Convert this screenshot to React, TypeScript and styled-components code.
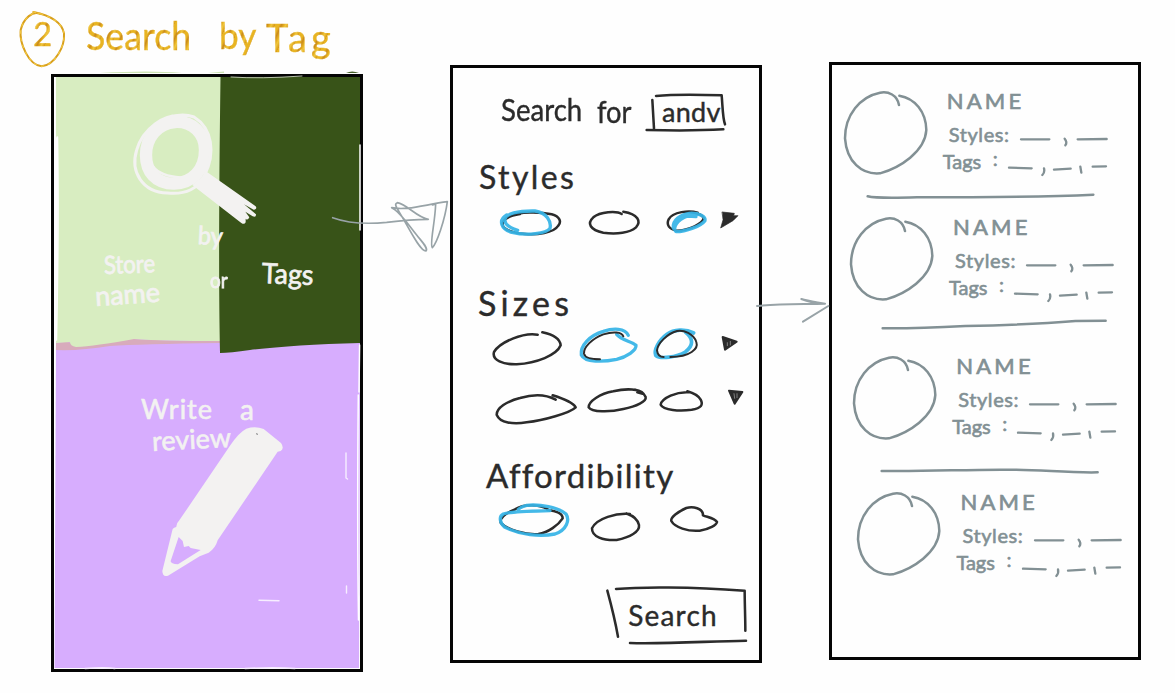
import React from "react";
import styled, { createGlobalStyle } from "styled-components";

const INK = "#2b2b2b";
const SLATE = "#829094";
const BLUE = "#36b4e6";
const CHALK = "#f3f2f1";

const GlobalStyle = createGlobalStyle`
  body { margin: 0; background: #fefefe; overflow: hidden; }
  * { box-sizing: border-box; }
`;

const Board = styled.main`
  width: 1175px;
  height: 693px;
  display: flex;
  flex-direction: column;
  font-family: Lato, "Liberation Sans", sans-serif;
  background: #fefefe;
`;

const Heading = styled.header`
  display: flex;
  height: 62px;
  padding: 10px 0 0 18px;
  color: #dca41c;
`;

const Flow = styled.div`
  display: flex;
  align-items: flex-start;
  padding-left: 51px;
`;

const Phone = styled.section<{ $drop: number }>`
  position: relative;
  flex: 0 0 312px;
  height: 598px;
  margin-top: ${(p) => p.$drop}px;
  border: 3px solid #050505;
  display: flex;
  flex-direction: column;
`;

const Line = styled.div<{ $top: number; $h: number }>`
  display: flex;
  flex: none;
  position: relative;
  margin-top: ${(p) => p.$top}px;
  height: ${(p) => p.$h}px;
  line-height: ${(p) => p.$h}px;
`;

const Word = styled.span<{
  $size: number;
  $w: number;
  $left?: number;
  $drop?: number;
  $track?: number;
  $stretch?: number;
  $tilt?: number;
  $bold?: number;
}>`
  flex: 0 0 ${(p) => p.$w}px;
  width: ${(p) => p.$w}px;
  margin-left: ${(p) => p.$left ?? 0}px;
  margin-top: ${(p) => p.$drop ?? 0}px;
  white-space: nowrap;
  font-size: ${(p) => p.$size}px;
  letter-spacing: ${(p) => p.$track ?? 0}px;
  -webkit-text-stroke: ${(p) => p.$bold ?? 0.4}px currentColor;
  transform: rotate(${(p) => p.$tilt ?? 0}deg) scaleX(${(p) => p.$stretch ?? 1});
  transform-origin: left center;
`;

const GoldWord = styled(Word)`
  align-self: flex-start;
  padding-bottom: 8px;
  background: repeating-linear-gradient(115deg, #e8b422 0 4px, #c98a1c 6px, #e2aa1c 8px, #f0c63c 10px, #d79a18 13px);
  background-clip: text;
  -webkit-background-clip: text;
  color: transparent;
`;

const Drawing = styled.svg<{ $left?: number; $top?: number }>`
  display: block;
  flex: none;
  overflow: visible;
  margin-left: ${(p) => p.$left ?? 0}px;
  margin-top: ${(p) => p.$top ?? 0}px;
  fill: none;
  stroke-linecap: round;
  stroke-linejoin: round;
`;

const Backdrop = styled(Drawing)`
  position: absolute;
  left: 0;
  top: 0;
`;

const Connector = styled(Drawing)`
  position: relative;
  z-index: 2;
  stroke: #98a3a7;
`;

type DoodleProps = {
  box: [number, number, number, number];
  left?: number;
  top?: number;
  children: React.ReactNode;
};

/* Sketches are drawn at three units to the pixel. */
const Doodle = ({ box, left, top, children }: DoodleProps) => (
  <Drawing $left={left} $top={top} width={box[2] / 3} height={box[3] / 3} viewBox={box.join(" ")}>
    {children}
  </Drawing>
);

const Ink = ({ d, w = 7.6 }: { d: string; w?: number }) => <path d={d} stroke={INK} strokeWidth={w} />;
const Mark = ({ d, w = 10 }: { d: string; w?: number }) => (
  <path d={d} stroke={BLUE} strokeWidth={w} opacity={0.93} />
);

const Field = styled.div`
  position: relative;
  flex: 0 0 80px;
  margin-left: 16px;
  display: flex;
`;

const SearchButton = styled.button`
  position: relative;
  width: 141px;
  height: 56px;
  margin: 44px 0 0 154px;
  padding: 0;
  border: 0;
  background: none;
  display: flex;
  align-items: center;
  font: inherit;
  color: ${INK};
`;

const Form = styled.div`
  color: ${INK};
  display: flex;
  flex-direction: column;
`;

const Chalk = styled.div`
  position: relative;
  color: ${CHALK};
  display: flex;
  flex-direction: column;
`;

const Card = styled.article<{ $left: number; $top: number }>`
  display: flex;
  height: 85px;
  margin: ${(p) => p.$top}px 0 0 ${(p) => p.$left}px;
  color: ${SLATE};
`;

const Details = styled.div`
  margin-left: 15px;
  display: flex;
  flex-direction: column;
`;

const Home = () => (
  <Phone $drop={12}>
    <Backdrop width="306" height="592" viewBox="54 77 306 592">
      <path d="M100 73 Q150 70 182 73Z M208 73 L224 71.5 L224 73Z" fill="#cfe5b6" />
      <path d="M346 73 Q352 70 359 73Z" fill="#48622c" />
      <path d="M56 340 L220 338 L360 338 L359 668 L54.5 668 Z" fill="#d7adfe" />
      <path d="M56 350 L56 343 Q66 341 72 343 Q100 342 122 338.5 Q165 341 220 341 L220 343 Q140 344 110 346 Q80 351 56 350Z" fill="#d8abbc" />
      <path d="M56 77 L221 77 L220 341 Q165 341 134 339 Q95 346 76 347 Q70 346 70 342 L56 343 Q58 230 58 140 L56 136Z" fill="#d8edc1" />
      <path d="M220.5 77 L360 77 L360 343 Q290 345 250 350 Q230 353 220 353 Q218 260 220.5 77Z" fill="#385318" />
      <path d="M231 77 Q260 79 302 76" stroke="#b8c3aa" strokeWidth="1" />
      <path d="M57.5 137 Q59 220 56.5 340 M359.6 345 L359 392 M358.3 395 Q357 520 358.5 620 M360 145 V230" stroke="#fff" strokeWidth="1.5" />
      <path d="M346 453 V478 L347.5 479 M346.5 586 V593 M259 600.3 L279 600.8 M85 668.5 Q105 667 115 668.5 M245 668.5 Q275 667 295 668.5" stroke="#f7eeff" strokeWidth="1.4" />
    </Backdrop>
    <Chalk>
      <Doodle left={79} top={35} box={[27, 21, 378, 340]}>
        <path d="M153 51 C205 48 243 85 243 135 C243 195 205 234 150 236 C95 236 66 200 66 150 C66 100 100 54 153 51Z" stroke={CHALK} strokeWidth="37" />
        <path d="M185 34 C120 20 55 75 38 135 C18 200 55 262 130 264 C185 270 225 250 242 210 C275 145 265 70 210 36 C160 18 95 45 65 85" stroke={CHALK} strokeWidth="9" />
        <path d="M88 185 C105 207 140 215 170 217" stroke={CHALK} strokeWidth="7" />
        <path d="M205 240 L250 202 L395 304 Q401 313 389 314 L360 298 L396 328 Q397 338 386 334 L364 320 L376 337 Q371 348 365 341 L365 352 Q361 360 352 354Z" fill={CHALK} />
      </Doodle>
      <Line $top={-5} $h={28}>
        <Word $left={144} $size={25} $w={25} $stretch={0.94} $tilt={3} $bold={0.8}>by</Word>
      </Line>
      <Line $top={2} $h={28}>
        <Word $left={50} $size={25} $w={52} $stretch={0.88} $tilt={-2} $bold={0.8}>Store</Word>
        <Word $left={54} $drop={16} $size={21} $w={18} $stretch={0.9} $bold={0.8}>or</Word>
        <Word $left={34} $drop={8} $size={28} $w={55} $stretch={0.96} $tilt={2} $bold={0.7}>Tags</Word>
      </Line>
      <Line $top={4} $h={28}>
        <Word $left={41} $size={27} $w={67} $tilt={-4} $bold={0.8}>name</Word>
      </Line>
      <Line $top={84} $h={30}>
        <Word $left={87} $size={27} $w={73} $track={1} $bold={0.6}>Write</Word>
        <Word $left={26} $size={28} $w={15} $bold={0.6}>a</Word>
      </Line>
      <Line $top={2} $h={30}>
        <Word $left={98} $size={27} $w={82} $tilt={-3} $bold={0.6}>review</Word>
      </Line>
      <Doodle left={108} top={-29} box={[350, 290, 365, 450]}>
        <path d="M603 295 Q630 286 655 296 L707 338 Q718 354 706 362 L697 364 L517 630 Q510 655 490 667 L463 678 L368 736 Q352 742 351 722 L381 600 Q382 592 393 590 Q392 580 402 570 L555 345 Q580 307 603 295Z M400 620 L376 692 Q375 700 398 702 L466 659 L436 653 L430 647 L416 650 L412 632Z" fill={CHALK} fillRule="evenodd" />
        <path d="M634 310 l2 2" stroke="#999" strokeWidth="4" />
      </Doodle>
    </Chalk>
  </Phone>
);

const Filters = () => (
  <Phone $drop={3}>
    <Form>
      <Line $top={24} $h={40}>
        <Word $left={48} $drop={-3} $size={30} $w={83} $stretch={0.92}>Search</Word>
        <Word $left={13} $drop={-1} $size={31} $w={33} $stretch={0.88}>for</Word>
        <Field>
          <Backdrop width="80" height="40" viewBox="618 96 240 120">
            <Ink d="M637 120 L642 205 M648 108 C710 102 780 104 845 106 C848 140 848 175 855 193 M620 210 C700 212 780 212 850 208" />
          </Backdrop>
          <Word $left={16} $size={27} $w={58} $track={0.3}>andv</Word>
        </Field>
      </Line>
      <Line $top={25} $h={40}>
        <Word $left={26} $size={32} $w={100} $track={2.4}>Styles</Word>
      </Line>
      <Line $top={11} $h={28}>
        <Doodle left={46} box={[177, 444, 188, 84]}>
          <Ink d="M215 468 C235 455 300 455 335 463 C360 470 365 485 355 497 C340 520 290 525 255 522 C210 518 185 505 188 490 C190 478 205 468 240 462" />
          <Mark d="M233 511 C215 505 195 495 195 482 C190 460 240 452 285 453 C320 458 335 485 330 505 C320 520 260 528 220 518 C180 508 175 480 200 465" />
        </Doodle>
        <Doodle left={26} box={[444, 444, 160, 84]}>
          <Ink d="M545 462 C530 452 480 455 460 472 C440 490 450 510 490 518 C530 524 570 518 588 502 C604 485 595 462 550 455" />
        </Doodle>
        <Doodle left={25} box={[680, 444, 122, 84]}>
          <Ink d="M775 458 C750 450 700 455 688 478 C680 495 690 508 712 512 C750 512 790 490 793 475 C790 462 770 458 750 456" />
          <Mark d="M702 505 C698 480 725 463 750 460 C780 458 800 470 797 482 C785 498 740 515 710 515 C700 505 710 480 745 468 L770 470" />
        </Doodle>
        <Doodle left={13} box={[841, 444, 54, 84]}>
          <path d="M848 456 L884 460 L882 467 L895 467 L880 482 L843 504 L850 480Z" fill={INK} stroke={INK} strokeWidth="2" />
        </Doodle>
      </Line>
      <Line $top={47} $h={40}>
        <Word $left={25} $size={34} $w={96} $track={4.2}>Sizes</Word>
      </Line>
      <Line $top={4} $h={40}>
        <Doodle left={38} box={[153, 200, 213, 120]}>
          <Ink d="M293 223 C250 215 180 245 162 275 C155 300 190 313 230 312 C290 308 350 285 362 255 C360 235 335 222 307 216" />
        </Doodle>
        <Doodle left={18} box={[420, 200, 173, 120]}>
          <Mark d="M565 225 C555 203 520 203 490 213 C450 225 420 255 424 284 C435 307 490 305 530 297 C560 290 590 270 588 255 C575 243 545 240 530 222" />
          <Ink d="M550 228 C545 215 520 213 490 222 C455 235 430 262 432 280 C435 296 460 297 480 297" w={6} />
        </Doodle>
        <Doodle left={16} box={[641, 200, 132, 120]}>
          <Mark d="M760 218 C735 205 700 207 680 222 C655 240 640 270 646 285 C660 298 710 290 735 275 C760 255 760 235 735 215" w={11} />
          <Ink d="M690 290 C750 290 775 265 768 245 C760 220 730 208 710 212 C680 220 652 250 650 270 C652 285 660 290 670 290" w={6} />
        </Doodle>
        <Doodle left={23.3} box={[843, 200, 52, 120]}>
          <path d="M848 230 L890 244 L855 268 Z" fill={INK} stroke={INK} strokeWidth="6" />
          <path d="M862 247 L862 256 M871 243 V254" stroke="#aaa" strokeWidth="2" />
        </Doodle>
      </Line>
      <Line $top={22} $h={40}>
        <Doodle left={43} box={[168, 388, 240, 120]}>
          <Ink d="M347 420 C320 405 280 403 240 415 C200 425 170 445 170 465 C180 490 220 495 260 488 C310 482 390 460 407 443 C400 430 370 417 338 407" />
        </Doodle>
        <Doodle left={12} box={[444, 388, 176, 120]}>
          <Ink d="M592 398 L608 402 C600 388 560 385 520 395 C480 402 445 425 446 443 C455 458 510 458 550 448 C590 440 620 425 617 412 C612 400 600 392 585 390" />
        </Doodle>
        <Doodle left={13.3} box={[660, 388, 129, 120]}>
          <Ink d="M748 398 C710 395 665 415 662 435 C670 452 720 455 755 450 C785 445 790 435 782 420 C775 408 760 400 742 395" />
        </Doodle>
        <Doodle left={25.3} box={[865, 388, 48, 120]}>
          <path d="M868 393 L908 397 L885 432 Z" fill={INK} stroke={INK} strokeWidth="6" />
          <path d="M883 402 L885 416 M892 402 V414" stroke="#aaa" strokeWidth="2" />
        </Doodle>
      </Line>
      <Line $top={26} $h={40}>
        <Word $left={33} $size={33} $w={190} $track={1.3}>Affordibility</Word>
      </Line>
      <Line $top={8} $h={40}>
        <Doodle left={46} box={[177, 189, 210, 120]}>
          <Ink d="M330 212 C300 190 250 192 225 208 C195 220 180 235 182 248 C200 270 260 285 295 282 C325 278 355 255 368 235 C368 222 350 213 322 210" />
          <Mark d="M330 212 C290 213 215 213 190 222 C175 230 180 250 195 262 C240 284 300 292 345 282 C380 270 390 240 378 222 C355 202 300 192 260 196 C250 198 240 203 235 208" />
        </Doodle>
        <Doodle left={22} box={[453, 189, 147, 120]}>
          <Ink d="M570 222 C530 218 470 235 456 265 C455 290 490 302 530 300 C570 292 600 275 597 255 C593 238 580 227 560 221" />
        </Doodle>
        <Doodle left={30.3} box={[691, 189, 143, 120]}>
          <Ink d="M790 225 C790 205 760 198 740 204 C715 215 692 232 695 243 C705 262 745 275 780 272 C810 268 830 255 832 246 C825 235 805 232 790 226" />
        </Doodle>
      </Line>
      <SearchButton>
        <Backdrop width="141" height="56" viewBox="501 441 423 168">
          <Ink d="M502 452 C515 500 525 540 534 590 M528 447 C600 440 750 440 914 452 C914 490 916 530 916 572 M570 609 C680 612 800 604 918 602" />
        </Backdrop>
        <Word $left={20} $size={28} $w={92} $track={1.2}>Search</Word>
      </SearchButton>
    </Form>
  </Phone>
);

const Dashes = ({ d, left, box }: { d: string; left: number; box: [number, number, number, number] }) => (
  <Doodle left={left} box={box}>
    <path d={d} stroke={SLATE} strokeWidth="7" />
  </Doodle>
);

const StoreCard = ({ left, top }: { left: number; top: number }) => (
  <Card $left={left} $top={top}>
    <Doodle box={[72, 105, 252, 255]}>
      <path d="M237 150 C232 120 205 108 180 113 C120 125 75 180 75 250 C80 320 125 360 180 355 C240 338 315 290 319 225 C318 170 285 130 238 122" stroke={SLATE} strokeWidth="7.5" />
    </Doodle>
    <Details>
      <Line $top={-1} $h={24}>
        <Word $left={4} $size={22} $w={80} $track={3.2} $bold={0.7}>NAME</Word>
      </Line>
      <Line $top={9} $h={24}>
        <Word $left={6} $size={20} $w={63} $track={0.6} $bold={0.6}>Styles:</Word>
        <Dashes left={9.3} box={[605, 201, 260, 72]} d="M605 253 L690 253 M736 251 Q745 262 738 271 M775 253 L862 252" />
      </Line>
      <Line $top={4} $h={24}>
        <Word $left={0} $size={20} $w={45} $drop={-1} $bold={0.6}>Tags</Word>
        <Word $left={5} $size={20} $w={10} $drop={-4} $bold={0.6}>:</Word>
        <Dashes left={6.3} box={[567, 285, 300, 72]} d="M567 338 L635 340 M672 340 Q675 352 667 360 M702 344 L752 341 M781 335 L784 353 M818 335 L858 334" />
      </Line>
    </Details>
  </Card>
);

const Divider = ({ d, left, top }: { d: string; left: number; top: number }) => (
  <Doodle left={left} top={top} box={[0, 0, 680, 30]}>
    <path d={d} stroke={SLATE} strokeWidth="7.5" />
  </Doodle>
);

const Results = () => (
  <Phone $drop={0}>
    <StoreCard left={11.7} top={25} />
    <Divider left={35.3} top={17} d="M2 13 Q30 20 150 16 Q500 16 679 8" />
    <StoreCard left={18} top={14} />
    <Divider left={49.8} top={17} d="M2 31 Q100 32 250 24 Q450 20 580 9 L671 8" />
    <StoreCard left={21.2} top={26.5} />
    <Divider left={48.8} top={27} d="M2 12 C150 14 250 7 380 8 C480 8 560 18 650 16" />
    <StoreCard left={25.4} top={14.2} />
  </Phone>
);

export default function App() {
  return (
    <>
      <GlobalStyle />
      <Board>
        <Heading>
          <Doodle box={[54, 30, 144, 175]}>
            <path d="M120 42 C100 30 70 55 62 90 C58 130 85 195 125 199 C165 195 195 140 192 100 C185 65 145 45 100 36" stroke="#d8a01c" strokeWidth="6" />
            <path d="M120 42 C100 30 70 55 62 90 C58 130 85 195 125 199 C165 195 195 140 192 100 C185 65 145 45 100 36" stroke="#f0c440" strokeWidth="4" strokeDasharray="7 15" />
          </Doodle>
          <Line $top={0} $h={48}>
            <GoldWord $left={-33} $drop={-1} $size={33} $w={19}>2</GoldWord>
            <GoldWord $left={34} $size={38} $w={110} $drop={1} $stretch={0.94}>Search</GoldWord>
            <GoldWord $left={23} $size={37} $w={42} $drop={1} $stretch={0.95}>by</GoldWord>
            <GoldWord $left={5} $size={38} $w={76} $drop={3} $track={4}>Tag</GoldWord>
          </Line>
        </Heading>
        <Flow>
          <Home />
          <Connector $top={118} width="87" height="90" viewBox="129 0 261 270" strokeWidth="5">
            <path d="M38 113 C90 132 140 133 200 127 C240 122 280 118 325 118 C290 112 260 72 232 68 C222 72 228 80 240 100 C265 140 300 215 318 213 C325 205 310 190 290 165 C262 130 240 95 215 83 C260 92 310 75 382 65 C375 120 350 190 337 203 C328 195 345 130 347 72 L338 75" />
          </Connector>
          <Filters />
          <Connector $top={208} width="67" height="70" viewBox="51 0 201 210" strokeWidth="6">
            <path d="M36 108 C100 102 170 103 240 101 C215 100 190 96 169 87 C190 94 220 97 240 101 M250 108 L174 155" />
          </Connector>
          <Results />
        </Flow>
      </Board>
    </>
  );
}
